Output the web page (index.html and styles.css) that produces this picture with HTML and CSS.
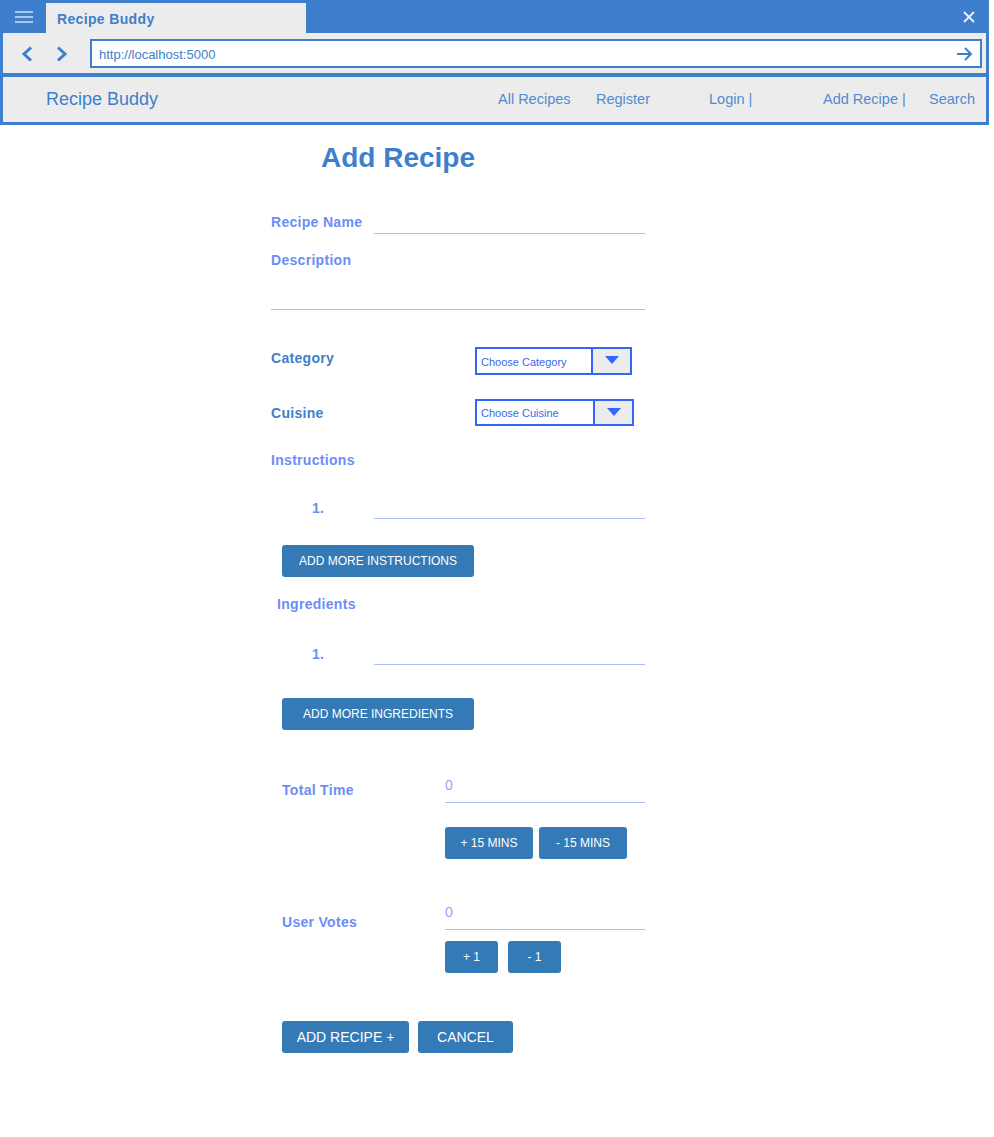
FILE: index.html
```html
<!DOCTYPE html>
<html lang="en">
<head>
<meta charset="utf-8">
<title>Recipe Buddy</title>
<link rel="stylesheet" href="styles.css">
</head>
<body>
<div class="window">
  <div class="titlebar">
    <div class="menu-icon">
      <svg width="18" height="12" viewBox="0 0 18 12"><rect x="0" y="0" width="18" height="2" fill="#a9c6ec"/><rect x="0" y="5" width="18" height="2" fill="#a9c6ec"/><rect x="0" y="10" width="18" height="2" fill="#a9c6ec"/></svg>
    </div>
    <div class="tab">Recipe Buddy</div>
    <div class="close">
      <svg width="12" height="12" viewBox="0 0 12 12"><path d="M1 1 L11 11 M11 1 L1 11" stroke="#eef3fb" stroke-width="1.8" fill="none"/></svg>
    </div>
  </div>
  <div class="toolbar">
    <svg class="chev" width="12" height="16" viewBox="0 0 12 16"><path d="M10 1.5 L3 8 L10 14.5" stroke="#3d7fcc" stroke-width="3" fill="none"/></svg>
    <svg class="chev fwd" width="12" height="16" viewBox="0 0 12 16"><path d="M2 1.5 L9 8 L2 14.5" stroke="#3d7fcc" stroke-width="3" fill="none"/></svg>
    <div class="url">
      <span>http://localhost:5000</span>
      <svg width="16" height="14" viewBox="0 0 16 14"><path d="M0 7 H14 M8 1 L14 7 L8 13" stroke="#3d7fcc" stroke-width="2" fill="none"/></svg>
    </div>
  </div>
  <div class="nav">
    <div class="brand">Recipe Buddy</div>
    <div class="link w98">All Recipes</div>
    <div class="link w113">Register</div>
    <div class="link w114">Login |</div>
    <div class="link w106">Add Recipe |</div>
    <div class="link">Search</div>
  </div>
</div>

<main class="form">
  <h1 class="title">Add Recipe</h1>

  <div class="row r-name">
    <label class="lbl lbl-w">Recipe Name</label>
    <div class="line flex1"></div>
  </div>

  <div class="r-desc">
    <label class="lbl">Description</label>
    <div class="line desc-area"></div>
  </div>

  <div class="row r-cat">
    <label class="lbl dark lbl-sel cat-lbl">Category</label>
    <div class="select w157">
      <span class="sel-text">Choose Category</span>
      <span class="sel-btn"><svg width="14" height="8" viewBox="0 0 14 8"><polygon points="0,0 14,0 7,8" fill="#3366ff"/></svg></span>
    </div>
  </div>

  <div class="row r-cui">
    <label class="lbl dark lbl-sel cui-lbl">Cuisine</label>
    <div class="select w159">
      <span class="sel-text">Choose Cuisine</span>
      <span class="sel-btn"><svg width="14" height="8" viewBox="0 0 14 8"><polygon points="0,0 14,0 7,8" fill="#3366ff"/></svg></span>
    </div>
  </div>

  <label class="lbl r-instr">Instructions</label>

  <div class="row r-item r-i1">
    <span class="lbl num">1.</span>
    <div class="line flex1"></div>
  </div>

  <button class="btn btn-wide r-b1">ADD MORE INSTRUCTIONS</button>

  <label class="lbl r-ingr">Ingredients</label>

  <div class="row r-item r-i2">
    <span class="lbl num">1.</span>
    <div class="line flex1"></div>
  </div>

  <button class="btn btn-wide r-b2">ADD MORE INGREDIENTS</button>

  <div class="row r-time">
    <label class="lbl side-lbl time-lbl">Total Time</label>
    <div class="line value">0</div>
  </div>
  <div class="btns r-tbtn">
    <button class="btn w88">+ 15 MINS</button>
    <button class="btn w88">- 15 MINS</button>
  </div>

  <div class="row r-votes">
    <label class="lbl side-lbl votes-lbl">User Votes</label>
    <div class="line value">0</div>
  </div>
  <div class="btns gap10 r-vbtn">
    <button class="btn w53">+ 1</button>
    <button class="btn w53">- 1</button>
  </div>

  <div class="btns gap9 r-final">
    <button class="btn big w127">ADD RECIPE +</button>
    <button class="btn big w95">CANCEL</button>
  </div>
</main>
</body>
</html>
```
FILE: styles.css
```css
html, body {
  margin: 0;
  padding: 0;
  background: #ffffff;
  font-family: "Liberation Sans", Arial, sans-serif;
}

/* ---------- browser chrome ---------- */
.window {
  width: 989px;
  box-sizing: border-box;
  background: #3d7fcc;
  padding: 0 3px 3px 3px;
}

.titlebar {
  height: 33px;
  display: flex;
  align-items: flex-start;
}

.menu-icon {
  width: 43px;
  height: 33px;
  display: flex;
  align-items: center;
  padding-left: 12px;
  box-sizing: border-box;
}

.tab {
  margin-top: 3px;
  width: 260px;
  height: 30px;
  box-sizing: border-box;
  background: #ececec;
  color: #3d7fcc;
  font-weight: bold;
  font-size: 14px;
  letter-spacing: 0.35px;
  padding-left: 11px;
  padding-top: 2px;
  display: flex;
  align-items: center;
}

.close {
  margin-left: auto;
  margin-right: 11px;
  height: 33px;
  display: flex;
  align-items: center;
}

.toolbar {
  height: 40px;
  box-sizing: border-box;
  padding-top: 1px;
  background: #ececec;
  display: flex;
  align-items: center;
  padding-left: 18px;
}

.chev.fwd {
  margin-left: 23px;
}

.url {
  margin-left: 22px;
  width: 892px;
  height: 29px;
  box-sizing: border-box;
  border: 2px solid #3d7fcc;
  background: #ffffff;
  display: flex;
  align-items: center;
  padding: 2px 7px 0 7px;
  color: #3d7fcc;
  font-size: 13px;
}

.url svg {
  margin-left: auto;
  margin-top: -1px;
}

.nav {
  margin-top: 4px;
  height: 45px;
  background: #ececec;
  display: flex;
  align-items: center;
  padding-left: 43px;
  padding-bottom: 1px;
  box-sizing: border-box;
  color: #4f8bd3;
  font-size: 14.5px;
}

.brand {
  width: 452px;
  font-size: 18px;
  color: #3d7fcc;
}

.w98 { width: 98px; }
.w113 { width: 113px; }
.w114 { width: 114px; }
.w106 { width: 106px; }

/* ---------- form ---------- */
.form {
  margin-left: 271px;
  width: 374px;
  padding-top: 17px;
  display: flex;
  flex-direction: column;
  align-items: flex-start;
}

.title {
  margin: 0 0 0 50px;
  font-size: 28px;
  line-height: 32px;
  font-weight: bold;
  color: #3d7fcc;
}

.row {
  display: flex;
  width: 100%;
}

.lbl {
  display: block;
  font-size: 14px;
  line-height: 16px;
  font-weight: bold;
  color: #6b8ef5;
  letter-spacing: 0.3px;
}

.lbl.dark {
  color: #3d7fcc;
}

.line {
  border-bottom: 1px solid #a9bdf6;
  box-sizing: border-box;
}

.flex1 {
  flex: 1;
}

.r-name {
  margin-top: 36px;
  height: 24px;
  align-items: center;
}

.lbl-w {
  width: 103px;
}

.r-name .line {
  align-self: stretch;
}

.r-desc {
  margin-top: 18px;
  width: 100%;
}

.desc-area {
  height: 42px;
  width: 100%;
}

.r-cat {
  margin-top: 37px;
  height: 28px;
  align-items: flex-start;
}

.lbl-sel {
  width: 204px;
}

.cat-lbl {
  margin-top: 3px;
}

.r-cui {
  margin-top: 24px;
  height: 27px;
  align-items: flex-start;
}

.cui-lbl {
  margin-top: 6px;
}

.select {
  display: flex;
  height: 100%;
  box-sizing: border-box;
  border: 2px solid #3366ff;
  background: #ffffff;
}

.w157 { width: 157px; }
.w159 { width: 159px; }

.sel-text {
  flex: 1;
  display: flex;
  align-items: center;
  padding-left: 4px;
  padding-top: 1px;
  font-size: 11px;
  color: #3a66ee;
}

.sel-btn {
  width: 37px;
  border-left: 2px solid #3366ff;
  background: #ececec;
  display: flex;
  align-items: center;
  justify-content: center;
  padding-bottom: 2px;
}

.r-instr {
  margin-top: 26px;
}

.r-item {
  height: 23px;
  align-items: center;
}

.r-item .line {
  align-self: stretch;
}

.num {
  width: 62px;
  padding-left: 41px;
  box-sizing: content-box;
}

.r-i1 {
  margin-top: 28px;
}

.btn {
  display: block;
  height: 32px;
  border: none;
  border-radius: 3px;
  background: #337ab7;
  color: #ffffff;
  font-family: "Liberation Sans", Arial, sans-serif;
  font-size: 12px;
  padding: 0;
  text-align: center;
}

.btn.big {
  font-size: 14px;
}

.btn-wide {
  width: 192px;
  margin-left: 11px;
}

.r-b1 {
  margin-top: 26px;
}

.r-ingr {
  margin-top: 19px;
  margin-left: 6px;
}

.r-i2 {
  margin-top: 30px;
}

.r-b2 {
  margin-top: 33px;
}

.r-time {
  margin-top: 46px;
  height: 27px;
  align-items: flex-start;
}

.side-lbl {
  width: 163px;
  padding-left: 11px;
  box-sizing: content-box;
}

.time-lbl {
  margin-top: 6px;
}

.value {
  flex: 1;
  align-self: stretch;
  font-size: 14px;
  line-height: 16px;
  padding-top: 1px;
  color: #8ea8f6;
}

.btns {
  display: flex;
  gap: 6px;
}

.gap10 { gap: 10px; }
.gap9 { gap: 9px; }

.r-tbtn {
  margin-top: 24px;
  margin-left: 174px;
}

.w88 { width: 88px; }
.w53 { width: 53px; }
.w127 { width: 127px; }
.w95 { width: 95px; }

.r-votes {
  margin-top: 44px;
  height: 27px;
  align-items: flex-start;
}

.votes-lbl {
  margin-top: 11px;
}

.r-vbtn {
  margin-top: 11px;
  margin-left: 174px;
}

.r-final {
  margin-top: 48px;
  margin-left: 11px;
  margin-bottom: 80px;
}
```
